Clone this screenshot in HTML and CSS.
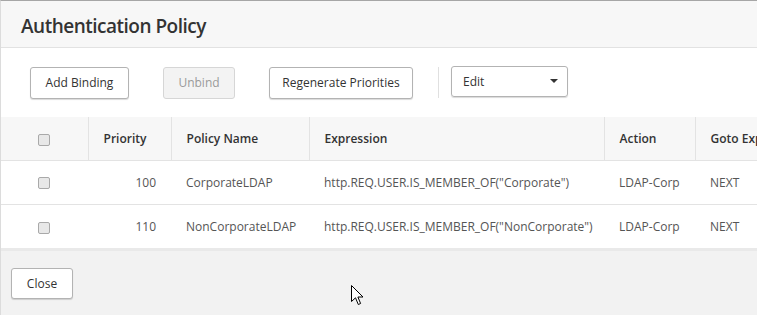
FILE: index.html
```html
<!DOCTYPE html>
<html>
<head>
<meta charset="utf-8">
<link rel="stylesheet" href="styles.css">
</head>
<body>
<div class="dialog">
  <div class="dlg-header"><h1 class="title">Authentication Policy</h1></div>
  <div class="toolbar">
    <button class="btn btn-add">Add Binding</button>
    <button class="btn btn-unbind" disabled>Unbind</button>
    <button class="btn btn-regen">Regenerate Priorities</button>
    <span class="sep"></span>
    <div class="select">
      <span>Edit</span>
      <span class="caret"></span>
    </div>
  </div>
  <div class="table-wrap">
    <table class="grid">
      <colgroup>
        <col class="c-check"><col class="c-prio"><col class="c-name"><col class="c-expr"><col class="c-act"><col class="c-goto">
      </colgroup>
      <thead>
        <tr>
          <th class="chk"><span class="cb"></span></th>
          <th>Priority</th>
          <th>Policy Name</th>
          <th>Expression</th>
          <th>Action</th>
          <th>Goto Expression</th>
        </tr>
      </thead>
      <tbody>
        <tr>
          <td class="chk"><span class="cb"></span></td>
          <td class="num">100</td>
          <td>CorporateLDAP</td>
          <td>http.REQ.USER.IS_MEMBER_OF("Corporate")</td>
          <td>LDAP-Corp</td>
          <td>NEXT</td>
        </tr>
        <tr>
          <td class="chk"><span class="cb"></span></td>
          <td class="num">110</td>
          <td>NonCorporateLDAP</td>
          <td>http.REQ.USER.IS_MEMBER_OF("NonCorporate")</td>
          <td>LDAP-Corp</td>
          <td>NEXT</td>
        </tr>
      </tbody>
    </table>
  </div>
  <div class="footer">
    <button class="btn btn-close">Close</button>
  </div>
  <svg class="cursor" width="13" height="21" viewBox="0 0 13 21">
    <path d="M0.5 0.5 L0.5 16.5 L4.5 12.8 L7.3 19.5 L9.6 18.5 L6.9 12 L12 12 Z" fill="#fff" stroke="#000" stroke-width="1" stroke-linejoin="miter"/>
  </svg>
</div>
</body>
</html>
```
FILE: styles.css
```css
* { box-sizing: border-box; }
html, body { margin: 0; padding: 0; }
body {
  font-family: "Open Sans", "Noto Sans", sans-serif;
  font-size: 12px;
  color: #333;
  background: #fff;
  width: 757px;
  height: 315px;
  overflow: hidden;
}
.dialog {
  position: relative;
  width: 900px;
  height: 315px;
  border-top: 1px solid #a6a6a6;
  border-left: 1px solid #dcdcdc;
  display: flex;
  flex-direction: column;
}
.dlg-header {
  height: 47px;
  background: #f7f7f7;
  border-bottom: 1px solid #e2e2e2;
  padding: 3px 0 0 20px;
  display: flex;
  align-items: center;
}
.title {
  margin: 0;
  font-size: 19px;
  font-weight: 600;
  color: #333;
  letter-spacing: -0.5px;
}
.toolbar {
  height: 69px;
  display: flex;
  align-items: center;
  padding-left: 29px;
}
.btn {
  font-family: "Open Sans", "Noto Sans", sans-serif;
  font-size: 12px;
  color: #333;
  background: #fff;
  border: 1px solid #b3b3b3;
  border-radius: 3px;
  box-shadow: 0 1px 1px rgba(0,0,0,0.15);
  height: 32px;
  padding: 0;
  margin: 0;
}
.btn-add { width: 99px; }
.btn-unbind {
  width: 72px;
  margin-left: 34px;
  background: #f3f3f3;
  border-color: #d6d6d6;
  color: #9a9a9a;
  box-shadow: none;
}
.btn-regen { width: 144px; margin-left: 34px; }
.sep {
  width: 1px;
  height: 31px;
  background: #e0e0e0;
  margin-left: 25px;
}
.select {
  margin-left: 12px;
  margin-top: -3px;
  width: 117px;
  height: 31px;
  border: 1px solid #b3b3b3;
  border-radius: 3px;
  box-shadow: 0 1px 1px rgba(0,0,0,0.15);
  display: flex;
  align-items: center;
  justify-content: space-between;
  padding: 0 9px 0 11px;
  color: #333;
}
.caret {
  width: 0; height: 0;
  border-left: 4px solid transparent;
  border-right: 4px solid transparent;
  border-top: 4px solid #333;
}
.table-wrap {
  overflow: hidden;
  border-bottom: 3px solid #e9e9e9;
}
.grid {
  border-collapse: collapse;
  table-layout: fixed;
  width: 815px;
}
.c-check { width: 87px; }
.c-prio { width: 83px; }
.c-name { width: 138px; }
.c-expr { width: 295px; }
.c-act { width: 91px; }
.c-goto { width: 121px; }
.grid th {
  height: 43px;
  background: #f7f7f7;
  text-align: left;
  font-weight: 600;
  color: #333;
  padding: 0 15px;
  border-right: 1px solid #e3e3e3;
  border-bottom: 1px solid #e3e3e3;
  white-space: nowrap;
  overflow: hidden;
}
.grid td {
  height: 44px;
  padding: 0 15px;
  border-bottom: 1px solid #e3e3e3;
  white-space: nowrap;
  color: #555;
}
.grid tbody tr:last-child td { border-bottom: none; height: 44px; }
.grid th.chk, .grid td.chk { text-align: center; padding: 0; }
.grid td.chk { padding-right: 2px; }
.grid td.num { text-align: right; padding-right: 15px; }
.cb {
  display: inline-block;
  width: 12px;
  height: 12px;
  border: 1px solid #a9a9a9;
  border-radius: 2px;
  background: #e8e8e8;
  vertical-align: middle;
}
.footer {
  flex: 1;
  background: #f2f2f2;
  padding: 17px 0 0 10px;
}
.btn-close { width: 62px; height: 31px; }
.cursor {
  position: absolute;
  left: 350px;
  top: 284px;
}
```
